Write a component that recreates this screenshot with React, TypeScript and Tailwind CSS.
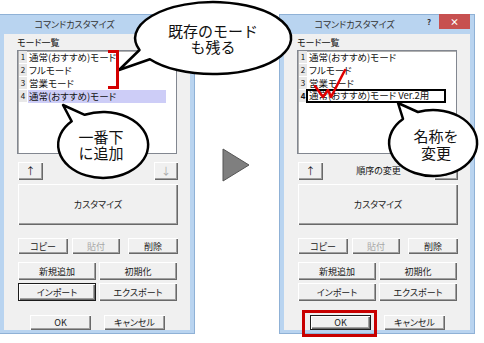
import React from "react";

type BtnProps = {
  label: string;
  className?: string;
  disabled?: boolean;
  dark?: boolean;
};

const Btn = ({ label, className = "", disabled = false, dark = false }: BtnProps) => (
  <div
    className={`flex shrink-0 items-center justify-center bg-[#f0f0f0] text-[9px] leading-none [font-feature-settings:'palt'] shadow-[inset_1px_1px_0_#fff,inset_-1px_-1px_0_#696969,inset_-2px_-2px_0_#a0a0a0] ${
      disabled ? "text-[#a8a8a8]" : "text-[#1a1a1a]"
    } ${dark ? "border border-[#1c1c1c]" : ""} ${className}`}
  >
    {label}
  </div>
);

type RowProps = {
  n: string;
  text: string;
  sel?: boolean;
  edit?: boolean;
};

const Row = ({ n, text, sel = false, edit = false }: RowProps) => (
  <div className="flex h-[13px] items-stretch">
    <div
      className={`ml-px flex w-[8px] shrink-0 items-center justify-center border-b border-white bg-[#e8e8e8] text-[8px] leading-none ${
        edit ? "font-bold" : ""
      }`}
    >
      {n}
    </div>
    {edit ? (
      <div className="-mt-px ml-[-1px] flex h-[14px] w-[140px] items-center border-2 border-black bg-white pl-[1px] text-[9.5px] leading-none [font-feature-settings:'palt']">
        {text}
      </div>
    ) : (
      <div
        className={`ml-px flex w-[138px] items-center pl-[1px] text-[9.5px] leading-none [font-feature-settings:'palt'] ${
          sel ? "bg-[#cdcdf7]" : ""
        }`}
      >
        {text}
      </div>
    )}
  </div>
);

const Win = ({ right = false, className = "" }: { right?: boolean; className?: string }) => (
  <div className={`flex h-[320px] w-[196px] shrink-0 flex-col border border-[#8fb1d6] bg-[#b9d4f0] px-[4px] pb-[3px] ${className}`}>
    <div className="flex h-[19px] items-start">
      <div className="flex h-full flex-1 items-center justify-center text-[9px] text-[#333] [font-feature-settings:'palt']">
        コマンドカスタマイズ
      </div>
      {/* left window's ? and × sit under the callout */}
      {right ? (
        <>
          <div className="mt-[3px] w-[8px] text-center text-[8px] font-bold leading-none text-[#333]">?</div>
          <div className="-mt-px ml-[6px] flex h-[15px] w-[31px] items-center justify-center bg-[#c75050] text-[9px] font-bold leading-none text-white">
            ×
          </div>
        </>
      ) : (
        <div className="w-[45px]" />
      )}
    </div>
    <div className="flex flex-1 flex-col bg-[#f0f0f0] pl-[13px] text-[#111]">
      <div className="mt-px h-[15px] text-[9px] leading-[15px] [font-feature-settings:'palt']">モード一覧</div>
      <div className="h-[104px] w-[160px] border border-[#828790] bg-white shadow-[inset_1px_1px_0_#b0b0b0]">
        <Row n="1" text="通常(おすすめ)モード" />
        <Row n="2" text="フルモード" />
        <Row n="3" text="営業モード" />
        {right ? (
          <Row n="4" text="通常(おすすめ)モード Ver.2用" edit />
        ) : (
          <Row n="4" text="通常(おすすめ)モード" sel />
        )}
      </div>
      <div className="ml-px mt-[8px] flex h-[18px] w-[160px] items-center justify-between">
        <Btn label="↑" className="h-[18px] w-[25px] text-[10px]" />
        {right && <span className="text-[9px] [font-feature-settings:'palt']">順序の変更</span>}
        <Btn label="↓" className="h-[18px] w-[24px] text-[10px]" disabled />
      </div>
      <Btn label="カスタマイズ" className="ml-px mt-[4px] h-[41px] w-[160px]" />
      <div className="ml-px mt-[13px] flex h-[16px] w-[160px]">
        <Btn label="コピー" className="h-full w-[50px]" />
        <Btn label="貼付" className="ml-[4px] h-full w-[48px]" disabled />
        <Btn label="削除" className="ml-[8px] h-full w-[50px]" />
      </div>
      <div className="ml-px mt-[8px] flex h-[18px] w-[160px] gap-[3px]">
        <Btn label="新規追加" className="h-full w-[78px]" />
        <Btn label="初期化" className="h-full w-[78px]" />
      </div>
      <div className="ml-px mt-[3px] flex h-[18px] w-[160px] gap-[3px]">
        <Btn label="インポート" className="h-full w-[78px]" dark={!right} />
        <Btn label="エクスポート" className="h-full w-[78px]" />
      </div>
      <div className="ml-[13px] mt-[14px] flex h-[15px] gap-[13px]">
        <Btn label="OK" className="h-full w-[61px]" dark={right} />
        <Btn label="キャンセル" className="h-full w-[61px]" />
      </div>
    </div>
  </div>
);

export default function App() {
  return (
    <div className="relative h-[343px] w-[484px] overflow-hidden bg-white font-['Noto_Sans_CJK_JP','Noto_Sans',sans-serif]">
      <div className="flex items-start pt-[14px]">
        <Win className="-ml-px" />
        <div className="w-[84px] shrink-0 pl-[27px] pt-[134px]">
          <svg width="28" height="34" viewBox="0 0 28 34">
            <polygon points="1,1 27,17 1,33" fill="#7f7f7f" stroke="#555" strokeWidth="1" />
          </svg>
        </div>
        <Win right />
      </div>

      {/* callouts and red marks */}
      <svg className="pointer-events-none absolute left-0 top-0" width="484" height="343" viewBox="0 0 484 343">
        <path
          d="M139.5 50 A78 36 0 1 1 149.9 59.2 L119 70 Z"
          fill="#fff"
          stroke="#000"
          strokeWidth="2.5"
          strokeLinejoin="round"
        />
        <path
          d="M84.7 114.8 A45 33 0 1 1 71.7 121.3 L63 105 Z"
          fill="#fff"
          stroke="#000"
          strokeWidth="2.5"
          strokeLinejoin="round"
        />
        <path
          d="M417.9 112 A44 33 0 1 1 403 118.9 L398 103 Z"
          fill="#fff"
          stroke="#000"
          strokeWidth="2.5"
          strokeLinejoin="round"
        />
        <polyline
          points="315,86 323,97 328,90 331,97 345,70"
          fill="none"
          stroke="#e00000"
          strokeWidth="2.5"
          strokeLinejoin="round"
          strokeLinecap="round"
        />
      </svg>
      <div className="absolute left-[108px] top-[50px] h-[39px] w-[11px] border-[3px] border-l-0 border-[#d40000]" />
      <div className="absolute left-[302px] top-[310px] h-[27px] w-[75px] border-[3px] border-[#c80000]" />

      <div className="absolute left-[168px] top-[23px] flex w-[90px] flex-col items-center text-[15px] leading-[16px] text-[#111]">
        <span>既存のモード</span>
        <span>も残る</span>
      </div>
      <div className="absolute left-[78px] top-[129px] flex w-[46px] flex-col items-center text-[15px] leading-[16px] text-[#111]">
        <span>一番下</span>
        <span>に追加</span>
      </div>
      <div className="absolute left-[413px] top-[127px] flex w-[46px] flex-col items-center text-[15px] leading-[17px] text-[#111]">
        <span>名称を</span>
        <span>変更</span>
      </div>
    </div>
  );
}
